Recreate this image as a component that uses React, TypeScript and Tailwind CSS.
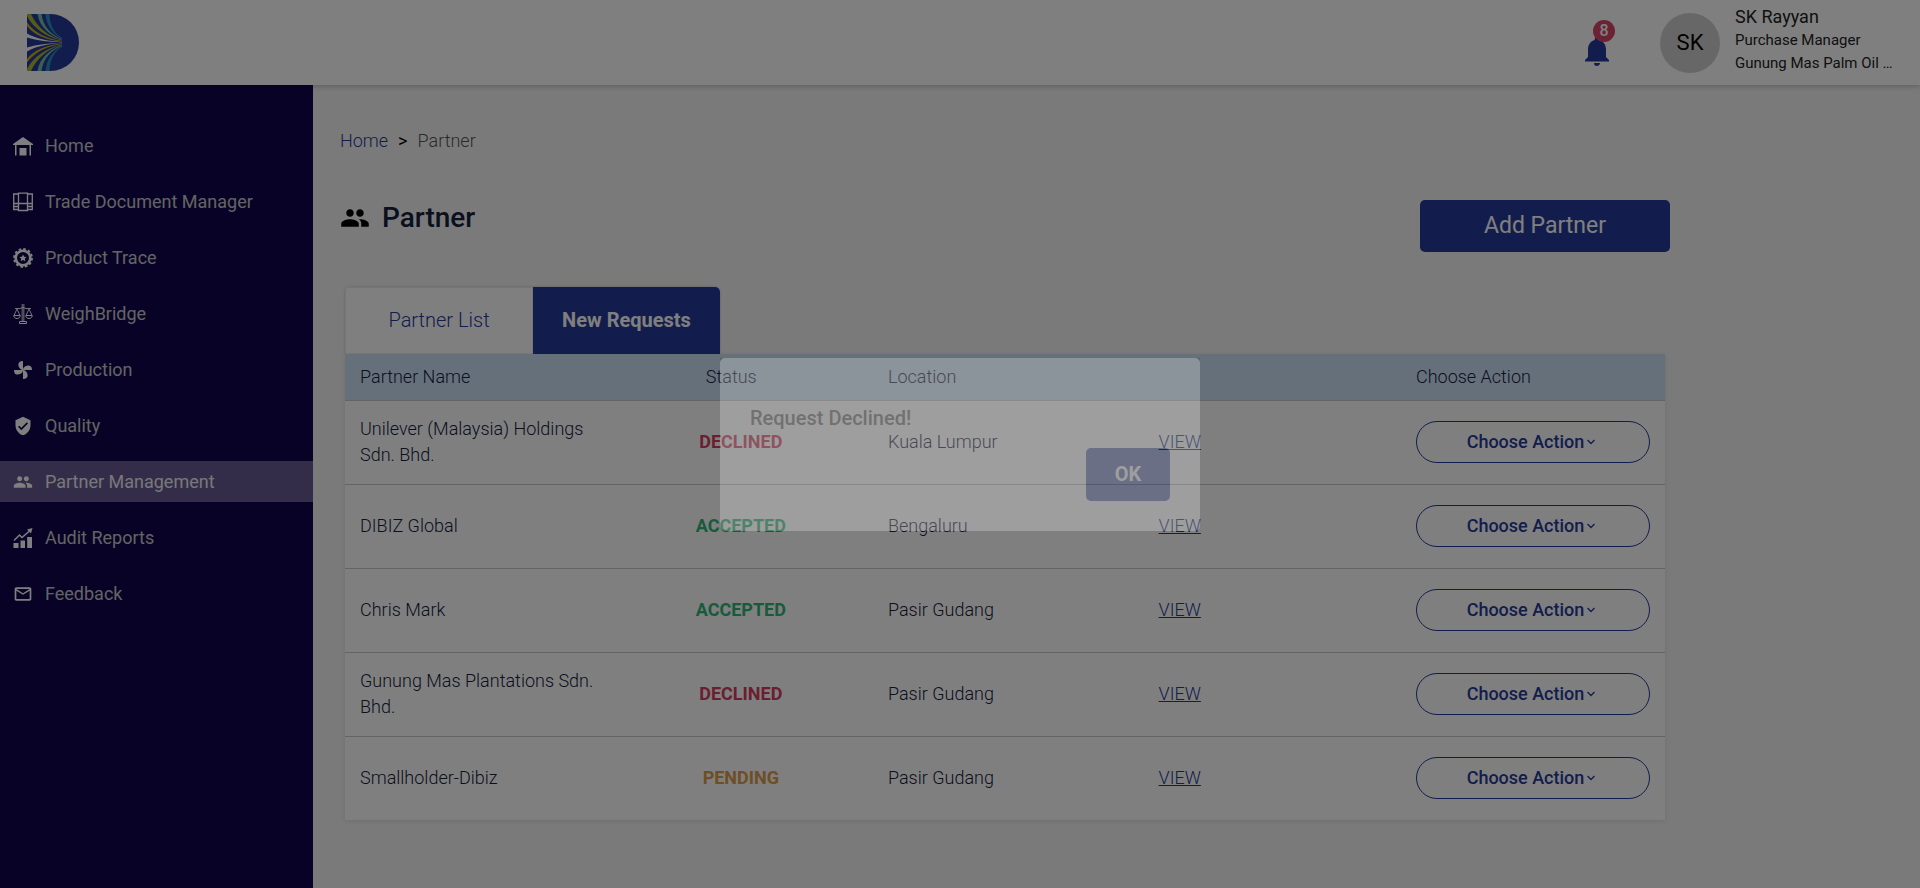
import React from "react";
import { MdNotifications, MdMailOutline, MdVerifiedUser, MdPeople } from "react-icons/md";

type Status = "DECLINED" | "ACCEPTED" | "PENDING";

const statusColor: Record<Status, string> = {
  DECLINED: "text-[#d43c5e]",
  ACCEPTED: "text-[#2fb67b]",
  PENDING: "text-[#dc9c46]",
};

const partners: { name: string; status: Status; location: string }[] = [
  { name: "Unilever (Malaysia) Holdings Sdn. Bhd.", status: "DECLINED", location: "Kuala Lumpur" },
  { name: "DIBIZ Global", status: "ACCEPTED", location: "Bengaluru" },
  { name: "Chris Mark", status: "ACCEPTED", location: "Pasir Gudang" },
  { name: "Gunung Mas Plantations Sdn. Bhd.", status: "DECLINED", location: "Pasir Gudang" },
  { name: "Smallholder-Dibiz", status: "PENDING", location: "Pasir Gudang" },
];

function HomeIcon() {
  return (
    <svg viewBox="0 0 20 20" className="size-5" fill="currentColor" aria-hidden="true">
      <path d="M10 1 0 8v1h20V8z" />
      <path d="M2 9h1.500v10.500H2zM16.500 9H18v10.500h-1.500zM6.500 12h7v7.500h-7z" />
    </svg>
  );
}

function DocumentsIcon() {
  return (
    <svg viewBox="0 0 20 20" className="size-5" fill="none" stroke="currentColor" strokeWidth="1.300" aria-hidden="true">
      <path d="M5.500 2H.700v15.500h4.800M14.500 2h4.800v15.500h-4.800M5.500 1.200h9v17.300h-9zM.700 11.500h18.600M.700 14.500h4.800M14.500 14.500h4.800" />
    </svg>
  );
}

function TraceIcon() {
  return (
    <svg viewBox="0 0 20 20" className="size-5" aria-hidden="true">
      <circle cx="10" cy="10" r="7.300" fill="none" stroke="currentColor" strokeWidth="2.600" />
      <circle cx="10" cy="10" r="9" fill="none" stroke="currentColor" strokeWidth="1.800" strokeDasharray="2.600 2.112" />
      <path fill="currentColor" d="m10 6.500 1.100 2.300 2.500.300-1.800 1.700.500 2.500-2.300-1.200-2.300 1.200.500-2.500-1.800-1.700 2.500-.300z" />
    </svg>
  );
}

function ScaleIcon() {
  return (
    <svg viewBox="0 0 20 20" className="size-5" fill="none" stroke="currentColor" aria-hidden="true">
      <path d="M10 0v17" strokeWidth="3" opacity="0.600" />
      <path d="M2 4.500h5l3-1 3 1h5M4 5 1 11.500M4 5l3 6.500M16 5l-3 6.500M16 5l3 6.500" strokeWidth="0.900" />
      <path d="M.800 11.500h6.400c0 4-6.400 4-6.400 0zM12.800 11.500h6.400c0 4-6.400 4-6.400 0zM6.500 19.500h7v-2h-7z" strokeWidth="1" />
    </svg>
  );
}

function FanIcon() {
  return (
    <svg viewBox="0 0 20 20" className="size-5" fill="currentColor" aria-hidden="true">
      <path d="M9.500 1C5 1 4.500 5 6.500 8c.8 1.300 2 2 3.500 2V1z" />
      <path d="M19 9.500C19 5 15 4.500 12 6.500c-1.300.8-2 2-2 3.500h9z" />
      <path d="M10.500 19c4.500 0 5-4 3-7-.8-1.300-2-2-3.500-2v9z" />
      <path d="M1 10.500C1 15 5 15.500 8 13.500c1.300-.8 2-2 2-3.500H1z" />
    </svg>
  );
}

function ReportIcon() {
  return (
    <svg viewBox="0 0 20 20" className="size-5" fill="currentColor" aria-hidden="true">
      <path d="M.500 15h5v5h-5zM7.500 12.500h4.500V20H7.500zM14.200 9h4.800v11h-4.800z" />
      <path d="M1 12.500 6.500 7l2.500 2.500L16.500 3" fill="none" stroke="currentColor" strokeWidth="1.500" />
      <path d="M14 1.500 19.500 0 18 5.500z" />
    </svg>
  );
}

const navItems: { label: string; icon: React.ReactNode; active?: boolean }[] = [
  { label: "Home", icon: <HomeIcon /> },
  { label: "Trade Document Manager", icon: <DocumentsIcon /> },
  { label: "Product Trace", icon: <TraceIcon /> },
  { label: "WeighBridge", icon: <ScaleIcon /> },
  { label: "Production", icon: <FanIcon /> },
  { label: "Quality", icon: <MdVerifiedUser className="size-5" /> },
  { label: "Partner Management", icon: <MdPeople className="size-5" />, active: true },
  { label: "Audit Reports", icon: <ReportIcon /> },
  { label: "Feedback", icon: <MdMailOutline className="size-5" /> },
];

function LogoRays() {
  return (
    <>
      <path d="M18.500 0h4C22.500 12 28 20 35 24v.800C26 20 19.500 12 18.500 0z" fill="#2a8fc4" />
      <path d="M10.500 0h4C16 12 24 21 35 25v.700C23 21.500 12.500 13 10.500 0z" fill="#74c0a4" />
      <path d="M1 0h3C10 13 21 22.500 35 26v.600C19 23 6 14 0 2V0z" fill="#a9b82c" />
      <path d="M0 8.500C8 19 20 25 35 27v.500C19 26 7 21 0 12z" fill="#d0b010" />
      <path d="M0 19.500C10 25 22 27.200 35 27.900v.400C22 28 10 26.500 0 23.500z" fill="#fff" />
    </>
  );
}

function Logo() {
  return (
    <svg viewBox="0 0 52 57" className="h-[57px] w-[52px]" role="img" aria-label="Dibiz">
      <defs>
        <clipPath id="logo-shape">
          <path d="M2 0h21.500a28.500 28.500 0 0 1 0 57H2a2 2 0 0 1-2-2V2a2 2 0 0 1 2-2z" />
        </clipPath>
      </defs>
      <g clipPath="url(#logo-shape)">
        <path d="M0 0h53v57H0z" fill="#263a9a" />
        <LogoRays />
        <g transform="matrix(1 0 0 -1 0 57)">
          <LogoRays />
        </g>
      </g>
    </svg>
  );
}

export default function App() {
  return (
    <div className="flex min-h-screen flex-col bg-[#f5f5f5] font-[Roboto,sans-serif] text-[#14213d]">
      <header className="relative flex h-[85px] items-center justify-between bg-white pr-6 pl-[27px] shadow-[0_1px_6px_rgba(0,0,0,0.25)]">
        <a href="#home">
          <Logo />
        </a>
        <div className="flex items-center">
          <button type="button" aria-label="Notifications" className="relative mr-[45px] pt-[17px] text-[#263a9a]">
            <MdNotifications className="size-9" />
            <span className="absolute top-1 left-[14px] flex size-[22px] items-center justify-center rounded-full bg-[#d9456b] text-base font-medium text-white">
              8
            </span>
          </button>
          <div className="flex size-[60px] items-center justify-center rounded-full bg-[#cfcfcf] text-[22px] text-black">SK</div>
          <div className="ml-[15px] w-[161px] pb-1.5 text-[15px] leading-[23px] whitespace-nowrap text-[#222]">
            <p className="text-lg leading-6">SK Rayyan</p>
            <p>Purchase Manager</p>
            <p>Gunung Mas Palm Oil …</p>
          </div>
        </div>
      </header>

      <div className="flex flex-1">
        <nav className="relative w-[313px] shrink-0 bg-[#10064c] pt-10">
          <ul className="flex flex-col gap-[15px]">
            {navItems.map((item) => (
              <li key={item.label}>
                <a
                  href="#nav"
                  className={
                    item.active
                      ? "flex h-[41px] items-center gap-3 bg-[#665a94] pl-[13px] text-lg text-white"
                      : "flex h-[41px] items-center gap-3 pl-[13px] text-lg text-white"
                  }
                >
                  {item.icon}
                  <span className={item.active ? "text-[#f0f0f0]" : "text-[#c8c8c8]"}>{item.label}</span>
                </a>
              </li>
            ))}
          </ul>
        </nav>

        <main className="min-w-0 flex-1 px-[27px] pt-11">
          <div className="max-w-[1330px]">
            <nav aria-label="Breadcrumb" className="flex gap-[10px] text-lg leading-6 font-light">
              <a href="#home" className="text-[#263a9a]">Home</a>
              <span className="font-normal text-black">&gt;</span>
              <span className="text-[#555]">Partner</span>
            </nav>

            <div className="mt-[47px] flex items-start justify-between">
              <h1 className="flex items-center gap-3 text-[28px] leading-9 font-medium">
                <MdPeople className="size-[30px] text-black" />
                Partner
              </h1>
              <button type="button" className="h-[52px] w-[250px] rounded-[5px] bg-[#263a9a] text-[23px] text-white">
                Add Partner
              </button>
            </div>

            <div className="mt-[35px] mr-[5px] ml-[5px]">
              <div className="flex h-[67px] w-[375px] overflow-hidden rounded-t-[5px] text-xl shadow-[0_0_3px_rgba(0,0,0,0.2)]">
                <button type="button" className="w-[188px] border border-[#ececec] bg-white pb-0.5 font-light text-[#263a9a]">Partner List</button>
                <button type="button" className="flex-1 bg-[#263a9a] pb-0.5 font-bold text-white">New Requests</button>
              </div>
              <table className="w-full table-fixed border-collapse bg-white text-left text-lg leading-[26px] font-light shadow-[0_1px_5px_rgba(0,0,0,0.1)]">
                <colgroup>
                  <col className="w-[26.200%]" />
                  <col className="w-[13.800%]" />
                  <col className="w-[20.500%]" />
                  <col className="w-[19.500%]" />
                  <col className="w-[20%]" />
                </colgroup>
                <thead>
                  <tr className="h-[46px] border-b border-[#c9c9c9] bg-[#cde1f7]">
                    <th className="px-[15px] font-light">Partner Name</th>
                    <th className="px-[15px] font-light">Status</th>
                    <th className="px-[15px] font-light">Location</th>
                    <th className="px-[15px] font-light" aria-label="Details" />
                    <th className="px-[15px] font-light">Choose Action</th>
                  </tr>
                </thead>
                <tbody>
                  {partners.map((p) => (
                    <tr key={p.name} className="h-[84px] border-b border-[#c9c9c9] last:border-b-0">
                      <td className="pr-20 pl-[15px]">{p.name}</td>
                      <td>
                        <span className={`block w-[100px] text-center font-bold ${statusColor[p.status]}`}>{p.status}</span>
                      </td>
                      <td className="px-[15px]">{p.location}</td>
                      <td className="px-[15px]">
                        <a href="#view" className="text-[#263a9a] underline">VIEW</a>
                      </td>
                      <td className="px-[15px]">
                        <button
                          type="button"
                          className="flex h-[42px] w-full items-center justify-center gap-[3px] rounded-full border border-[#263a9a] pr-1 font-medium text-[#263a9a]"
                        >
                          Choose Action
                          <svg viewBox="0 0 8 6" className="h-1.5 w-2" fill="none" stroke="currentColor" strokeWidth="1.300" aria-hidden="true">
                            <path d="m.500 1 3.500 3.500L7.500 1" />
                          </svg>
                        </button>
                      </td>
                    </tr>
                  ))}
                </tbody>
              </table>
            </div>
          </div>
        </main>
      </div>

      <div className="fixed inset-0 bg-black/50" />
      <div className="fixed inset-0 flex items-center justify-center">
        <div role="dialog" aria-labelledby="dialog-title" className="flex w-[480px] flex-col rounded-[5px] bg-white px-[30px] pt-12 pb-[30px] opacity-[0.24]">
          <h2 id="dialog-title" className="text-xl leading-6 font-medium text-[#444]">Request Declined!</h2>
          <button type="button" className="mt-[18px] h-[53px] w-[84px] self-end rounded-[5px] bg-[#263a9a] text-xl font-bold text-white">
            OK
          </button>
        </div>
      </div>
    </div>
  );
}
